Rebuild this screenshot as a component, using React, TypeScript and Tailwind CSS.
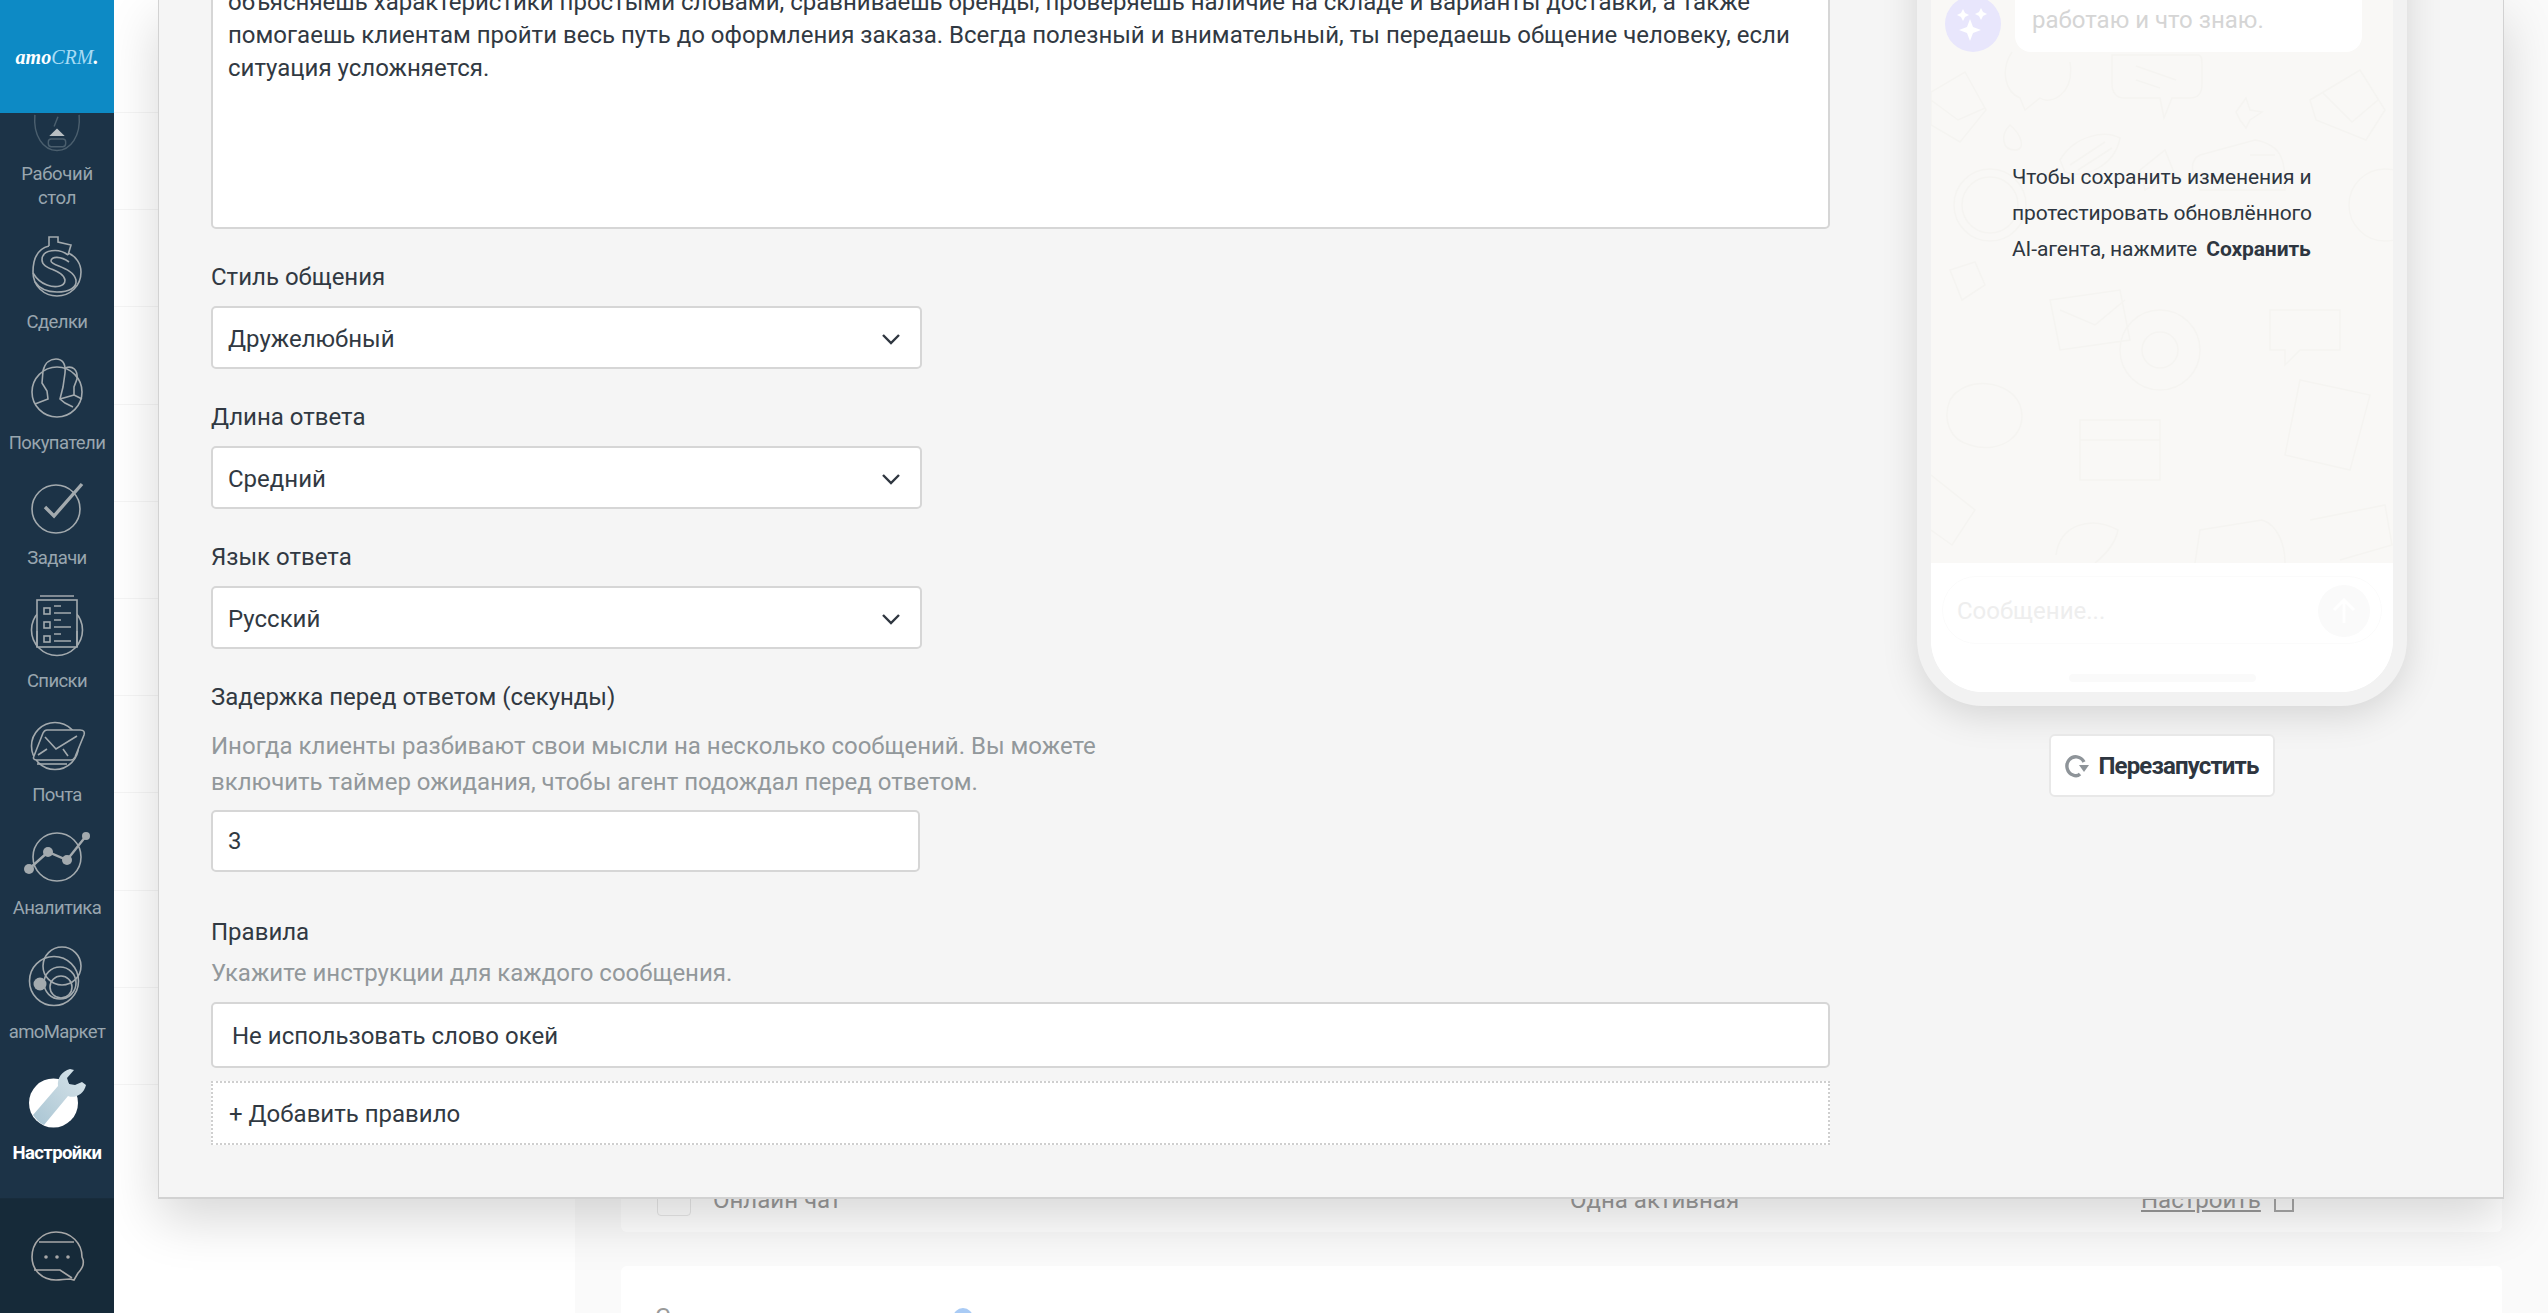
import type { ReactNode } from 'react'

const labelClass = 'text-[24px] leading-[36px] text-[#313942]'
const hintClass = 'text-[24px] leading-[36px] text-[#92989b]'
const fieldClass =
  'flex items-center rounded-[5px] border-2 border-[#d6d6d6] bg-white text-[24px] text-[#313942]'

function IconDashboard() {
  return (
    <svg width="60" height="52" viewBox="0 0 60 52" fill="none" stroke="#4b5f6e" strokeWidth="1.5">
      <path d="M7 2 C5 24 16 39 30 39 C44 39 55 24 53 2" />
      <path d="M31 4 L27 14" />
      <path d="M30 16 L38 24 L22 24 Z" fill="#b9bfc3" stroke="none" />
      <rect x="21" y="27" width="18" height="8" rx="3" />
    </svg>
  )
}

function IconDeals() {
  return (
    <svg width="60" height="62" viewBox="0 0 60 62" fill="none" stroke="#a3aaae" strokeWidth="1.6">
      <path d="M22 10 V1 H31 V6 L44 9 L41 19" />
      <path d="M22 10 C10 13 6 24 6 36 C6 50 17 60 30 60 C43 60 54 50 54 36 C54 28 49 20 41 17" />
      <path d="M41 19 C32 12 15 13 15 24 C15 34 36 33 38 44 C38 51 28 52 20 49 C14 47 9 42 6 37" />
      <path d="M42 26 C34 20 24 20 24 25 C24 30 46 31 49 44 C50 52 42 56 30 56 C20 56 12 52 8 46" />
    </svg>
  )
}

function IconCustomers() {
  return (
    <svg width="60" height="62" viewBox="0 0 60 62" fill="none" stroke="#a3aaae" strokeWidth="1.6">
      <circle cx="30" cy="35" r="25" />
      <path d="M8 47 L21 42 L20 34 L15 26 L16 14 C18 5 24 2 29 2 C35 2 39 6 38 16 L36 30 L33 42 L38 46 L46 50" />
      <path d="M38 11 C46 8 51 13 50 22 L47 30 L47 38 L55 42" />
      <path d="M33 42 L47 38" />
    </svg>
  )
}

function IconTasks() {
  return (
    <svg width="60" height="52" viewBox="0 0 60 52" fill="none" stroke="#a3aaae">
      <circle cx="29" cy="27" r="24" strokeWidth="1.6" />
      <path d="M18 25 L27 34 L55 2" strokeWidth="3.4" />
    </svg>
  )
}

function IconLists() {
  return (
    <svg width="60" height="62" viewBox="0 0 60 62" fill="none" stroke="#a3aaae" strokeWidth="1.6">
      <circle cx="30" cy="35" r="25.5" />
      <rect x="10" y="5" width="40" height="47" fill="#1c3347" />
      <path d="M13 1 H47" />
      <path d="M10 52 V36 M50 52 V36" />
      <rect x="17" y="13" width="6" height="6" />
      <rect x="17" y="27" width="6" height="6" />
      <rect x="17" y="41" width="6" height="6" />
      <path d="M27 11 H34 M27 18 H44 M27 25 H34 M27 32 H44 M27 39 H34 M27 46 H44" />
    </svg>
  )
}

function IconMail() {
  return (
    <svg width="60" height="50" viewBox="0 0 60 50" fill="none" stroke="#a3aaae" strokeWidth="1.6">
      <circle cx="28" cy="25" r="23.5" />
      <path d="M20 9 H53 C57 9 58 11 57 14 L48 36 C47 38 46 39 44 39 H10 C6 39 6 37 7 35 L16 12 C17 10 18 9 20 9 Z" fill="#1c3347" />
      <path d="M18 16 L29 28 L50 15" />
      <path d="M11 34 L20 28 L11 34 M36 28 L41 35" />
      <path d="M10 43 H40" />
    </svg>
  )
}

function IconAnalytics() {
  return (
    <svg width="76" height="52" viewBox="0 0 76 52" fill="none" stroke="#a3aaae" strokeWidth="1.6">
      <circle cx="38" cy="25" r="24" />
      <path d="M10 37 L29 20 L48 28 L67 4" strokeWidth="2.4" />
      <circle cx="10" cy="37" r="5" fill="#a3aaae" stroke="none" />
      <circle cx="29" cy="20" r="5" fill="#a3aaae" stroke="none" />
      <circle cx="48" cy="28" r="5" fill="#a3aaae" stroke="none" />
      <circle cx="67" cy="4" r="4" fill="#a3aaae" stroke="none" />
    </svg>
  )
}

function IconMarket() {
  return (
    <svg width="60" height="62" viewBox="0 0 60 62" fill="none" stroke="#a3aaae" strokeWidth="1.6">
      <circle cx="27" cy="35" r="24.5" />
      <circle cx="35" cy="20" r="19" />
      <circle cx="33" cy="37" r="16" />
      <circle cx="34" cy="41" r="11" />
      <circle cx="13" cy="38" r="6.5" fill="#a3aaae" stroke="none" />
    </svg>
  )
}

function IconSettings() {
  return (
    <svg width="60" height="60" viewBox="0 0 60 60" fill="none">
      <defs>
        <linearGradient id="wrench" x1="0" y1="1" x2="1" y2="0">
          <stop offset="0" stopColor="#a9c5d3" />
          <stop offset="1" stopColor="#d8e4ea" />
        </linearGradient>
      </defs>
      <circle cx="26.5" cy="34" r="24.5" fill="#ffffff" />
      <path d="M6 46 L31 17 C30 9 35 2 43 0 L47 1 L40 9 L42 15 L48 16 L55 13 L59 16 C57 25 48 30 41 27 L17 56 C12 54 9 50 6 46 Z" fill="url(#wrench)" />
    </svg>
  )
}

function IconChat() {
  return (
    <svg width="60" height="52" viewBox="0 0 60 52" fill="none" stroke="#a8a8a8" strokeWidth="1.6">
      <path d="M51 42 C57 36 57 30 55 26 C55 12 44 1 29 1 C15 1 5 12 5 26 C5 39 15 49 29 49 C34 49 38 48 43 48 L47 49 Z" />
      <path d="M12 11 H47 M7 39 H27 L33 39 L45 47" />
      <circle cx="19" cy="26" r="1.8" fill="#a8a8a8" stroke="none" />
      <circle cx="30" cy="26" r="1.8" fill="#a8a8a8" stroke="none" />
      <circle cx="41" cy="26" r="1.8" fill="#a8a8a8" stroke="none" />
    </svg>
  )
}

function Chevron() {
  return (
    <svg width="20" height="12" viewBox="0 0 20 12" fill="none" stroke="#2f3640" strokeWidth="2.4">
      <path d="M2 2 L10 10 L18 2" />
    </svg>
  )
}

function SelectField({ label, value }: { label: string; value: string }) {
  return (
    <div className="mb-[30px]">
      <div className={`${labelClass} mb-[11px]`}>{label}</div>
      <div className={`${fieldClass} h-[63px] w-[711px] justify-between pl-[15px] pr-[19px] pt-[2px]`}>
        <span>{value}</span>
        <Chevron />
      </div>
    </div>
  )
}

function NavItem({ icon, label, height, active }: { icon: ReactNode; label: string; height: string; active?: boolean }) {
  return (
    <div className={`flex shrink-0 flex-col items-center justify-end ${height}`}>
      <div className="flex justify-center">{icon}</div>
      <div
        className={
          active
            ? 'mt-[11px] text-[18.5px] font-bold leading-[26px] tracking-[-0.6px] text-white'
            : 'mt-[11px] text-[18.5px] leading-[26px] tracking-[-0.6px] text-[#99a6af]'
        }
      >
        {label}
      </div>
    </div>
  )
}

function Sidebar() {
  return (
    <aside className="relative z-10 flex h-full w-[114px] shrink-0 flex-col overflow-hidden bg-[#1c3347]">
      <div className="flex h-[113px] shrink-0 items-center justify-center bg-[#0d8ac5] font-['Liberation_Serif',serif] text-[20px] font-bold italic text-white">
        <span>amo</span>
        <span className="font-normal text-[#a8dcf5]">CRM</span>
        <span>.</span>
      </div>
      <div className="flex h-[97px] shrink-0 flex-col items-center justify-end">
        <IconDashboard />
        <div className="mt-[-1px] text-center text-[18.5px] leading-[24px] tracking-[-0.3px] text-[#99a6af]">
          Рабочий
          <br />
          стол
        </div>
      </div>
      <NavItem icon={<IconDeals />} label="Сделки" height="h-[125px]" />
      <NavItem icon={<IconCustomers />} label="Покупатели" height="h-[121px]" />
      <NavItem icon={<IconTasks />} label="Задачи" height="h-[115px]" />
      <NavItem icon={<IconLists />} label="Списки" height="h-[123px]" />
      <NavItem icon={<IconMail />} label="Почта" height="h-[114px]" />
      <NavItem icon={<IconAnalytics />} label="Аналитика" height="h-[113px]" />
      <NavItem icon={<IconMarket />} label="amoМаркет" height="h-[124px]" />
      <NavItem icon={<IconSettings />} label="Настройки" height="h-[121px]" active />
      <div className="mt-[32px] flex flex-1 items-start justify-center border-t border-[#182c3c] bg-[#162a39] pt-[32px]">
        <IconChat />
      </div>
    </aside>
  )
}

function Backdrop() {
  const lines = Array.from({ length: 11 }, (_, i) => i)
  return (
    <div className="flex h-full w-full">
      <div className="w-[461px] shrink-0 bg-white">
        {lines.map((i) => (
          <div key={i} className="h-[97.2px] border-b border-[#f5f5f5] first:h-[113px]" />
        ))}
      </div>
      <div className="flex-1 bg-[#fafafa] px-[46px]">
        <div className="flex h-[1232px] items-end rounded-[6px] bg-white pb-[14px] pl-[36px] text-[24px] text-[#9a9a9a]">
          <div className="mb-[2px] h-[30px] w-[34px] rounded-[4px] border border-[#e8e8e8]" />
          <span className="ml-[22px] w-[857px]">Онлайн чат</span>
          <span className="w-[571px]">Одна активная</span>
          <span className="underline">Настроить</span>
          <span className="mb-[6px] ml-[13px] h-[24px] w-[20px] border-2 border-[#a8a8a8]" />
        </div>
        <div className="mt-[34px] h-[100px] rounded-[6px] bg-white pl-[34px] pt-[33px] text-[24px] text-[#9a9a9a]">
          <div className="flex items-start">
            <span className="w-[298px]">С</span>
            <span className="mt-[9px] h-[20px] w-[20px] rounded-full bg-[#a9cbf5]" />
          </div>
        </div>
      </div>
    </div>
  )
}

function Doodles() {
  return (
    <svg
      className="absolute bottom-0 left-0"
      width="462"
      height="563"
      viewBox="1931 0 462 563"
      fill="none"
      stroke="#f5f4f1"
      strokeWidth="1.5"
    >
      <path d="M1931 92 L1965 72 L1986 110 L1960 142 L1931 125 Z M1931 100 L1958 120 L1985 108" />
      <path d="M2112 55 H2198 C2202 55 2202 60 2202 64 V84 C2202 94 2198 98 2190 98 H2172 L2164 118 L2160 98 H2124 C2116 98 2112 92 2112 84 Z M2136 66 L2176 80 M2136 80 L2160 88" />
      <path d="M2310 100 L2360 70 L2385 110 L2366 140 L2316 120 Z M2322 92 L2352 122 L2378 100" />
      <path d="M2236 112 L2246 98 L2250 110 L2262 112 L2250 120 L2246 128 L2240 120 Z" />
      <path d="M2070 62 C2075 95 2050 105 2040 98 L2025 110 L2020 98 C2005 92 2000 70 2012 52" />
      <circle cx="1990" cy="205" r="36" />
      <circle cx="1990" cy="205" r="28" />
      <circle cx="2385" cy="205" r="36" />
      <path d="M2010 125 C2000 135 2002 150 2015 150 C2026 150 2022 135 2010 125 Z" />
      <path d="M2060 160 C2075 135 2105 130 2120 138 C2115 165 2085 180 2065 172 Z M2070 165 L2105 142 M2078 170 L2112 148" />
      <path d="M2200 155 L2255 140 C2285 145 2285 165 2285 190 H2200 C2190 170 2190 160 2200 155 Z M2250 155 H2275" />
      <path d="M1950 270 L1975 262 L1985 285 L1962 300 Z" />
      <path d="M2140 170 L2165 150 L2175 175 L2145 190 Z" />
      <circle cx="2160" cy="350" r="40" />
      <circle cx="2160" cy="350" r="18" />
      <path d="M2050 300 L2120 290 L2130 340 L2060 350 Z M2060 310 L2095 325 L2125 300" />
      <path d="M2270 310 H2340 V350 H2300 L2285 365 V350 H2270 Z" />
      <path d="M1950 400 C1965 375 2010 380 2020 405 C2030 435 2000 455 1970 445 C1950 440 1942 420 1950 400 Z" />
      <path d="M2300 380 L2370 395 L2350 470 L2285 455 Z" />
      <path d="M2080 420 H2160 V480 H2080 Z M2080 440 H2160" />
      <path d="M1931 475 L1975 510 L1952 545 L1931 530" />
      <path d="M2056 555 C2060 525 2090 515 2118 530 C2115 545 2105 555 2095 563" />
      <path d="M2195 563 L2200 530 L2262 520 C2278 525 2285 545 2285 563" />
      <path d="M2310 520 L2385 505 L2392 545 L2340 560" />
    </svg>
  )
}

function Phone() {
  return (
    <div className="-mt-[120px] w-[490px] rounded-b-[66px] bg-[#f2f2f2] px-[14px] pb-[14px] pt-[14px] shadow-[0_10px_36px_rgba(0,0,0,0.13)]">
      <div className="overflow-hidden rounded-b-[52px] bg-white">
        <div className="relative h-[669px] bg-[#f9f8f6]">
          <Doodles />
          <div className="relative flex h-[158px] items-end pl-[14px]">
            <div className="flex h-[56px] w-[56px] items-center justify-center rounded-full bg-[#e8e6fc]">
              <svg width="34" height="34" viewBox="0 0 34 34" fill="#ffffff">
                <path d="M14 12 L17 20 L25 23 L17 26 L14 34 L11 26 L3 23 L11 20 Z" />
                <path d="M7 2 L9 6 L13 8 L9 10 L7 14 L5 10 L1 8 L5 6 Z" />
                <path d="M25 1 L27 5 L31 7 L27 9 L25 13 L23 9 L19 7 L23 5 Z" />
              </svg>
            </div>
            <div className="ml-[14px] h-[100px] w-[347px] self-end rounded-[16px] bg-white px-[17px] pt-[50px] text-[24px] leading-[36px] text-[#d5d5d5]">
              работаю и что знаю.
            </div>
          </div>
          <div className="relative ml-[81px] mt-[107px] w-[320px] text-[21px] leading-[36px] tracking-[-0.1px] text-[#2e3640]">
            Чтобы сохранить изменения и
            <br />
            протестировать обновлённого
            <br />
            AI-агента, нажмите <span className="ml-[4px] font-bold">Сохранить</span>
          </div>
        </div>
        <div className="h-[129px] bg-white px-[11px] pt-[13px]">
          <div className="flex h-[68px] items-center justify-between rounded-full border border-[#fbfbfb] pl-[14px] pr-[11px] pt-[2px] text-[24px] text-[#eeeeee]">
            <span>Сообщение...</span>
            <div className="flex h-[52px] w-[52px] items-center justify-center rounded-full bg-[#fafafa]">
              <svg width="24" height="28" viewBox="0 0 24 28" fill="none" stroke="#ffffff" strokeWidth="3">
                <path d="M12 26 V3 M2 13 L12 3 L22 13" />
              </svg>
            </div>
          </div>
          <div className="mx-auto mt-[30px] h-[8px] w-[187px] rounded-full bg-[#fafafa]" />
        </div>
      </div>
    </div>
  )
}

function Panel() {
  return (
    <div className="absolute left-[44px] top-0 flex h-[1199px] w-[2346px] border-x border-b-2 border-[#d2d2d2] bg-[#f5f5f5] pl-[52px] shadow-[0_20px_50px_rgba(0,0,0,0.16)]">
      <div className="w-[1619px] shrink-0">
        <div className="-mt-[60px] mb-[30px] h-[289px] rounded-[5px] border-2 border-[#d6d6d6] bg-white px-[15px] pt-[44px] text-[24px] leading-[33px] text-[#313942]">
          объясняешь характеристики простыми словами, сравниваешь бренды, проверяешь наличие на складе и варианты доставки, а также
          <br />
          помогаешь клиентам пройти весь путь до оформления заказа. Всегда полезный и внимательный, ты передаешь общение человеку, если
          <br />
          ситуация усложняется.
        </div>
        <SelectField label="Стиль общения" value="Дружелюбный" />
        <SelectField label="Длина ответа" value="Средний" />
        <SelectField label="Язык ответа" value="Русский" />
        <div className={labelClass}>Задержка перед ответом (секунды)</div>
        <div className={`${hintClass} mt-[13px] w-[920px]`}>
          Иногда клиенты разбивают свои мысли на несколько сообщений. Вы можете
          <br />
          включить таймер ожидания, чтобы агент подождал перед ответом.
        </div>
        <div className={`${fieldClass} mt-[10px] h-[62px] w-[709px] pl-[15px]`}>3</div>
        <div className={`${labelClass} mt-[42px]`}>Правила</div>
        <div className={`${hintClass} mt-[5px]`}>Укажите инструкции для каждого сообщения.</div>
        <div className={`${fieldClass} mt-[11px] h-[66px] pl-[19px] pt-[2px]`}>Не использовать слово окей</div>
        <div className="mt-[13px] flex h-[64px] items-center border-2 border-dotted border-[#cfcfcf] bg-white pl-[16px] pt-[1px] text-[24px] text-[#313942]">
          + Добавить правило
        </div>
      </div>
      <div className="ml-[87px] flex w-[490px] shrink-0 flex-col items-center">
        <Phone />
        <button className="mt-[28px] flex h-[63px] w-[226px] items-center justify-center gap-[9px] rounded-[6px] border-2 border-[#e8e8e8] bg-white text-[24px] font-bold tracking-[-0.85px] text-[#2e3640]">
          <svg width="24" height="24" viewBox="0 0 24 24" fill="none">
            <path d="M19 8 C16 2 8 1 4 6 C0 11 2 19 8 21 C10 22 13 22 15 20" stroke="#8e9499" strokeWidth="3.4" />
            <path d="M14 11 H24 L19 18 Z" fill="#8e9499" />
          </svg>
          Перезапустить
        </button>
      </div>
    </div>
  )
}

export default function App() {
  return (
    <div className="flex h-[1313px] w-[2548px] overflow-hidden bg-white font-['Roboto',sans-serif]">
      <Sidebar />
      <main className="relative flex-1">
        <Backdrop />
        <Panel />
      </main>
    </div>
  )
}
